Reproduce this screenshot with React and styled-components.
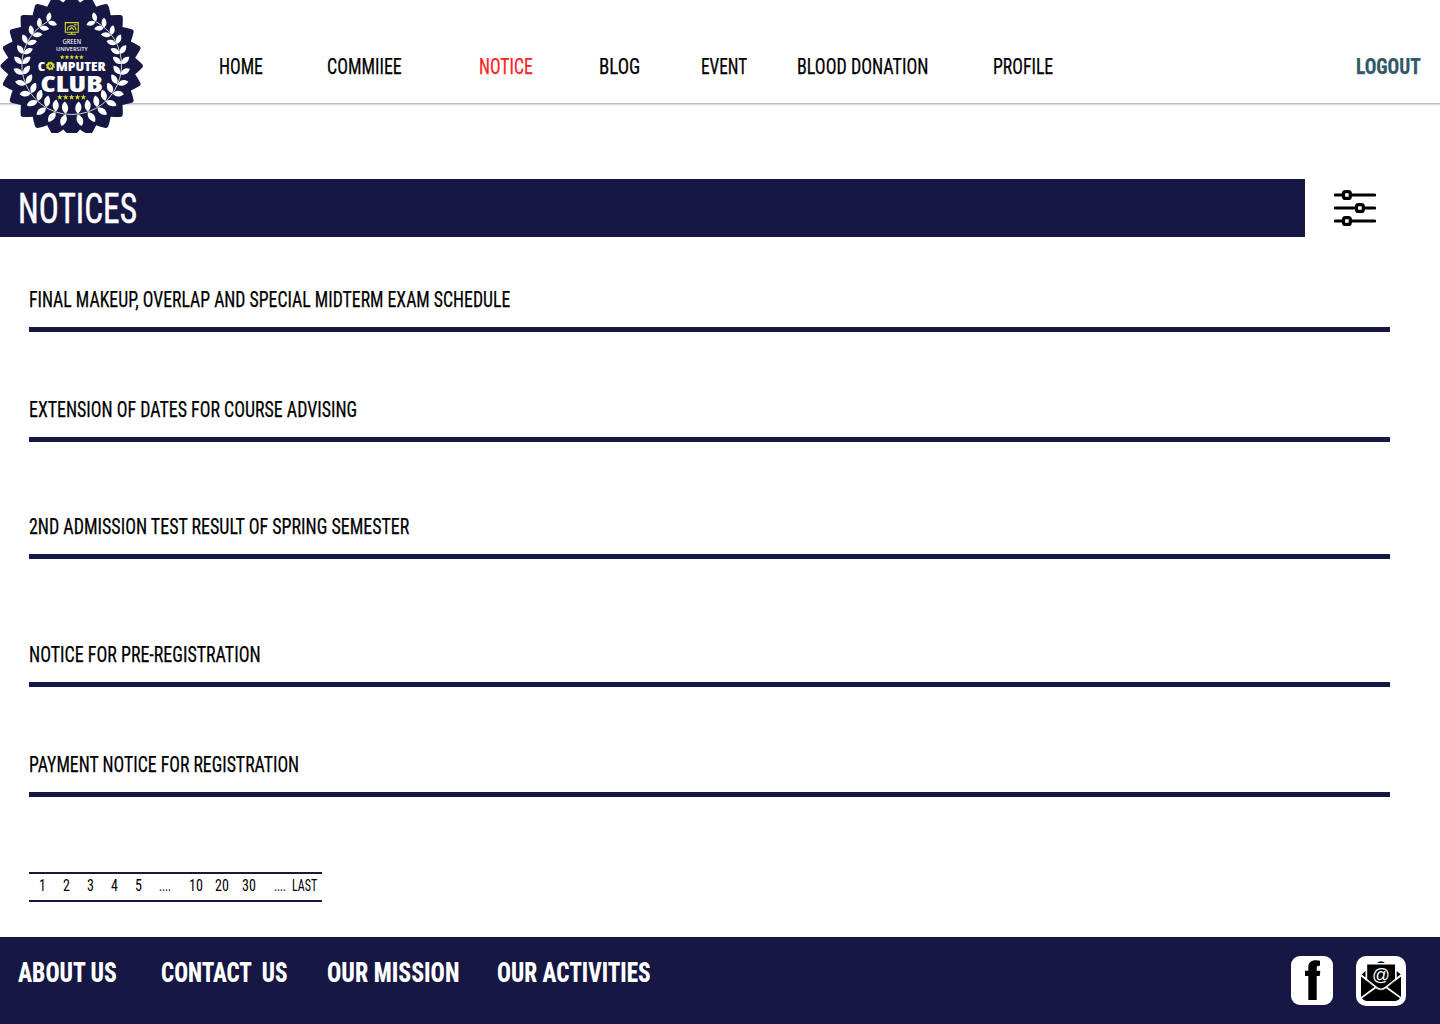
import React, { useLayoutEffect, useRef, useState } from "react";
import styled, { createGlobalStyle } from "styled-components";

const NAVY = "#171743";
const YELLOW = "#d9dc2b";

const GlobalStyle = createGlobalStyle`
  * { box-sizing: border-box; }
  body { margin: 0; background: #fff; }
`;

const Page = styled.div`
  display: flex;
  flex-direction: column;
  width: 1440px;
  height: 1024px;
  overflow: hidden;
  background: #fff;
  color: #000;
  font-family: Roboto, "Liberation Sans Narrow", "Liberation Sans", sans-serif;
  font-stretch: 75%;
  font-weight: 400;
`;

const FitBox = styled.span`
  display: block;
  flex: none;
  width: ${(p) => p.$width}px;
  white-space: pre;
`;
const FitInner = styled.span`
  display: inline-block;
  transform-origin: 0 50%;
`;

/* Condenses a line of text to the given width. */
function Fit({ width, children }) {
  const ref = useRef(null);
  const [scale, setScale] = useState(1);
  useLayoutEffect(() => {
    if (ref.current.offsetWidth) setScale(width / ref.current.offsetWidth);
  }, [width, children]);
  return (
    <FitBox $width={width}>
      <FitInner ref={ref} style={{ transform: `scaleX(${scale})` }}>{children}</FitInner>
    </FitBox>
  );
}

const Header = styled.header`
  position: relative;
  display: flex;
  justify-content: space-between;
  flex: none;
  height: 103px;
  padding: 54px 19px 0 218.6px;
  box-shadow: 0 1px 0 #bcbcbc, 0 2px 0 #dedede, 0 3px 0 #f6f6f6;
`;
const Nav = styled.nav`
  display: flex;
`;
const NavLink = styled.a`
  margin-left: ${(p) => p.$gap || 0}px;
  font-size: 22.6px;
  line-height: 26px;
  font-weight: ${(p) => (p.$bold ? 750 : 400)};
  color: ${(p) => p.$color || "#000"};
  -webkit-text-stroke: 0.25px currentColor;
`;
const Badge = styled.svg`
  position: absolute;
  left: 0;
  top: 0;
`;

const TitleRow = styled.div`
  display: flex;
  align-items: center;
  flex: none;
  height: 58px;
  margin-top: 76px;
`;
const TitleBar = styled.h1`
  width: 1305px;
  height: 58px;
  margin: 0 29px 0 0;
  padding-left: 18px;
  background: ${NAVY};
  color: #fff;
  font-size: 43px;
  font-weight: 400;
  line-height: 58px;
  -webkit-text-stroke: 0.5px #fff;
`;

const NoticeList = styled.main`
  display: flex;
  flex-direction: column;
  flex: none;
  padding: 50px 50px 0 29px;
`;
const Notice = styled.article`
  height: 45px;
  margin-bottom: ${(p) => p.$after}px;
  border-bottom: 5px solid ${NAVY};
  font-size: 22.6px;
  line-height: 26px;
  -webkit-text-stroke: 0.25px #000;
`;

const Pager = styled.div`
  display: flex;
  flex: none;
  width: 293px;
  height: 30px;
  margin: 75px 0 35px 29px;
  border: solid ${NAVY};
  border-width: 2px 0;
  font-size: 16px;
  line-height: 24px;
`;
const PageLink = styled.a`
  margin-left: ${(p) => p.$gap}px;
`;

const Footer = styled.footer`
  display: flex;
  justify-content: space-between;
  height: 87px;
  padding: 19px 34px 0 18px;
  background: ${NAVY};
  color: #fff;
`;
const FooterLinks = styled.div`
  display: flex;
  font-size: 27.5px;
  font-weight: 800;
  line-height: 33px;
`;
const FooterLink = styled.a`
  margin-left: ${(p) => p.$gap || 0}px;
`;
const Social = styled.div`
  display: flex;
  gap: 23px;
`;

const points = (n, fn) => Array.from({ length: n }, (_, i) => fn(i));

function Star({ x, y, r }) {
  const pts = points(10, (i) => {
    const a = (i * Math.PI) / 5 - Math.PI / 2;
    const q = i % 2 ? r * 0.42 : r;
    return `${x + q * Math.cos(a)},${y + q * Math.sin(a)}`;
  }).join(" ");
  return <polygon points={pts} fill={YELLOW} />;
}

const CX = 71.7;
const CY = 66;

function sealPath() {
  const at = (deg, r) => {
    const a = (deg * Math.PI) / 180;
    return `${(CX + r * Math.cos(a)).toFixed(2)} ${(CY + r * Math.sin(a)).toFixed(2)}`;
  };
  let d = `M${at(-7.5, 64)}`;
  for (let i = 0; i < 24; i++) {
    const c = i * 15;
    d += `Q${at(c - 4.6, 67.2)} ${at(c - 2, 69.8)}Q${at(c, 72.8)} ${at(c + 2, 69.8)}Q${at(c + 4.6, 67.2)} ${at(c + 7.5, 64)}`;
  }
  return d + "Z";
}

const LEAF = "M0 -0.4C-3.7 -2.8 -4 -7.6 -0.6 -11.6C3.6 -9 3.8 -3.6 0 -0.4Z";

function Laurel() {
  return (
    <g fill="#fff">
      {points(13, (i) => {
        const deg = 173 - i * 12;
        const a = (deg * Math.PI) / 180;
        const x = -49.5 * Math.sin(a);
        const y = -49.5 * Math.cos(a);
        const k = 1.08 - i * 0.02;
        const tilt = 14 + Math.min(i * 5, 30);
        return (
          <g key={i} transform={`translate(${x} ${y}) rotate(${-deg}) scale(${k})`}>
            <path d={LEAF} transform={`rotate(${tilt})`} />
            <path d={LEAF} transform={`rotate(${180 - tilt}) scale(-1 1)`} />
          </g>
        );
      })}
      <path d="M0 49.5A49.5 49.5 0 0 1 -24 -43.5" fill="none" stroke="#fff" strokeWidth="0.8" />
    </g>
  );
}

function ClubBadge() {
  return (
    <Badge width="146" height="133" viewBox="0 0 146 133">
      <path d={sealPath()} fill={NAVY} />
      <g transform={`translate(${CX} ${CY - 1})`}>
        <Laurel />
        <g transform="scale(-1 1)"><Laurel /></g>
      </g>
      <g fill="none" stroke={YELLOW} strokeWidth="1.1">
        <path d="M65.3 22.6H78.2V32.3H65.3Z" />
        <path d="M67.5 30.3V29A4.2 3.8 0 0 1 75.8 29V30.3M69.5 29.8L71.6 27.6L73.8 29.8M74 24.8H76.8" />
        <path d="M71.7 32.3V34M67.5 34.2H76" />
      </g>
      <g fill="#fff" fontFamily="'Open Sans', 'Noto Sans', sans-serif" textAnchor="middle">
        <text x="71.8" y="44" fontSize="6.3" fontWeight="500" textLength="18.5" lengthAdjust="spacingAndGlyphs">GREEN</text>
        <text x="71.8" y="50.8" fontSize="6.1" fontWeight="500" textLength="31.5" lengthAdjust="spacingAndGlyphs">UNIVERSITY</text>
        <text x="41.4" y="71" fontSize="12" fontWeight="800" textLength="7.5" lengthAdjust="spacingAndGlyphs">C</text>
        <text x="80.7" y="71" fontSize="12" fontWeight="800" textLength="50" lengthAdjust="spacingAndGlyphs">MPUTER</text>
        <text x="71.8" y="92" fontSize="23" fontWeight="800" textLength="62.5" lengthAdjust="spacingAndGlyphs">CLUB</text>
      </g>
      <circle cx="50.3" cy="66" r="2.7" fill="none" stroke={YELLOW} strokeWidth="1.9" />
      <circle cx="50.3" cy="66" r="3.9" fill="none" stroke={YELLOW} strokeWidth="1.2" strokeDasharray="1.55 1.51" />
      <circle cx="50.3" cy="66" r="0.7" fill={YELLOW} />
      {points(5, (i) => <Star key={i} x={62.2 + i * 4.8} y={57.2} r={2.5} />)}
      {points(5, (i) => <Star key={i} x={59.8 + i * 5.9} y={97.2} r={3} />)}
    </Badge>
  );
}

const FilterIcon = () => (
  <svg width="42" height="38" viewBox="0 0 42 38">
    <g stroke="#000" strokeWidth="3.2" strokeLinecap="round">
      <path d="M1.5 6H40.5M1.5 19H40.5M1.5 32H40.5" />
    </g>
    <g fill="#fff" stroke="#000" strokeWidth="3.2">
      <rect x="9.5" y="2.6" width="6.8" height="6.8" rx="2" />
      <rect x="22.5" y="15.6" width="6.8" height="6.8" rx="2" />
      <rect x="9.5" y="28.6" width="6.8" height="6.8" rx="2" />
    </g>
  </svg>
);

const FacebookIcon = () => (
  <svg width="42" height="49" viewBox="0 0 42 49">
    <rect width="42" height="49" rx="9" fill="#fff" />
    <path d="M17.3 44V20H14V14.7H17.3V11.5C17.3 6.6 20.2 4.3 25 4.3C26.6 4.3 28 4.5 29 4.8V9.8C26.7 9.4 25.7 10 25.7 12V14.7H29.3L28.7 20H25.7V44Z" />
  </svg>
);

const MailIcon = () => (
  <svg width="50" height="50" viewBox="0 0 50 50">
    <rect width="50" height="50" rx="10" fill="#fff" />
    <path d="M21 7Q25 3.6 29 7Z" />
    <path d="M11.2 8.4H39V25L28.5 32.5Q25 35 21.5 32.5L11.2 25Z" />
    <path d="M9.5 15V21.5L5.5 18.5ZM40.7 15V21.5L44.7 18.5Z" />
    <path d="M5 20.5L18.5 31L5 41Z M45 20.5L31.5 31L45 41Z" />
    <path d="M6 42.3L20 32.2Q25 36.3 30 32.2L44 42.3Q42.5 45 39.5 45H10.5Q7.5 45 6 42.3Z" />
    <path d="M5.3 19.3L20.5 31.3Q25 34.8 29.5 31.3L44.7 19.3" fill="none" stroke="#fff" strokeWidth="1.3" />
    <text x="25" y="25" fill="#fff" fontSize="19" textAnchor="middle" fontFamily="'Liberation Sans', sans-serif" textLength="18" lengthAdjust="spacingAndGlyphs">@</text>
  </svg>
);

const NAV = [
  ["HOME", 44, 0],
  ["COMMIIEE", 74.5, 64],
  ["NOTICE", 54, 77.5, "#ff2222"],
  ["BLOG", 41, 66],
  ["EVENT", 46.5, 61],
  ["BLOOD DONATION", 131.5, 49.5],
  ["PROFILE", 60.5, 64.5],
];
const NOTICES = [
  ["FINAL MAKEUP, OVERLAP AND SPECIAL MIDTERM EXAM SCHEDULE", 481.5, 65],
  ["EXTENSION OF DATES FOR COURSE ADVISING", 328, 72],
  ["2ND ADMISSION TEST RESULT OF SPRING SEMESTER", 380, 83],
  ["NOTICE FOR PRE-REGISTRATION", 231.5, 65],
  ["PAYMENT NOTICE FOR REGISTRATION", 270, 0],
];
const PAGES = [
  ["1", 7, 10], ["2", 7, 17], ["3", 7, 17], ["4", 7, 17], ["5", 7, 17],
  ["....", 12, 17], ["10", 14, 18], ["20", 14, 12], ["30", 14, 13],
  ["....", 12, 18], ["LAST", 25.5, 6],
];
const FOOTER = [
  ["ABOUT US", 99, 0],
  ["CONTACT  US", 127, 44],
  ["OUR MISSION", 132, 39],
  ["OUR ACTIVITIES", 154, 38],
];

export default function App() {
  return (
    <Page>
      <GlobalStyle />
      <Header>
        <ClubBadge />
        <Nav>
          {NAV.map(([label, width, gap, color]) => (
            <NavLink key={label} $gap={gap} $color={color}>
              <Fit width={width}>{label}</Fit>
            </NavLink>
          ))}
        </Nav>
        <NavLink $bold $color="#2f5868">
          <Fit width={65}>LOGOUT</Fit>
        </NavLink>
      </Header>
      <TitleRow>
        <TitleBar><Fit width={119}>NOTICES</Fit></TitleBar>
        <FilterIcon />
      </TitleRow>
      <NoticeList>
        {NOTICES.map(([label, width, after]) => (
          <Notice key={label} $after={after}><Fit width={width}>{label}</Fit></Notice>
        ))}
      </NoticeList>
      <Pager>
        {PAGES.map(([label, width, gap], i) => (
          <PageLink key={i} $gap={gap}><Fit width={width}>{label}</Fit></PageLink>
        ))}
      </Pager>
      <Footer>
        <FooterLinks>
          {FOOTER.map(([label, width, gap]) => (
            <FooterLink key={label} $gap={gap}><Fit width={width}>{label}</Fit></FooterLink>
          ))}
        </FooterLinks>
        <Social>
          <FacebookIcon />
          <MailIcon />
        </Social>
      </Footer>
    </Page>
  );
}
